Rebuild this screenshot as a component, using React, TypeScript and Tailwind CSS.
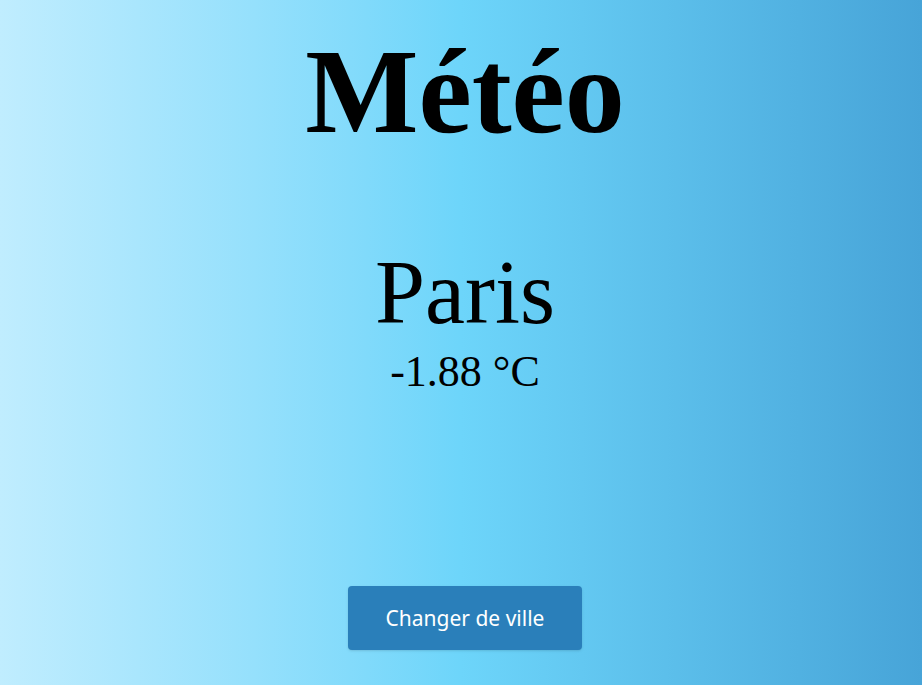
export default function App() {
  return (
    <div className="min-h-[685px] w-full pl-[8px] bg-gradient-to-r from-[#c0edfe] via-[#6dd5fa] to-[#47a4d8] flex flex-col items-center font-['Liberation_Serif',serif] text-black">
      <h1 className="mt-[32px] text-[120px] font-bold leading-none">Météo</h1>

      <div className="mt-[96px] flex flex-col items-center">
        <h2 className="text-[90px] leading-none">Paris</h2>
        <p className="mt-[12px] text-[44px] leading-none">-1.88 °C</p>
      </div>

      <button
        type="button"
        className="mt-[192px] w-[234px] h-[64px] pt-[2px] rounded-[4px] bg-[#2a7fba] text-white text-[21px] font-['Noto_Sans',sans-serif] shadow-sm"
      >
        Changer de ville
      </button>
    </div>
  );
}
